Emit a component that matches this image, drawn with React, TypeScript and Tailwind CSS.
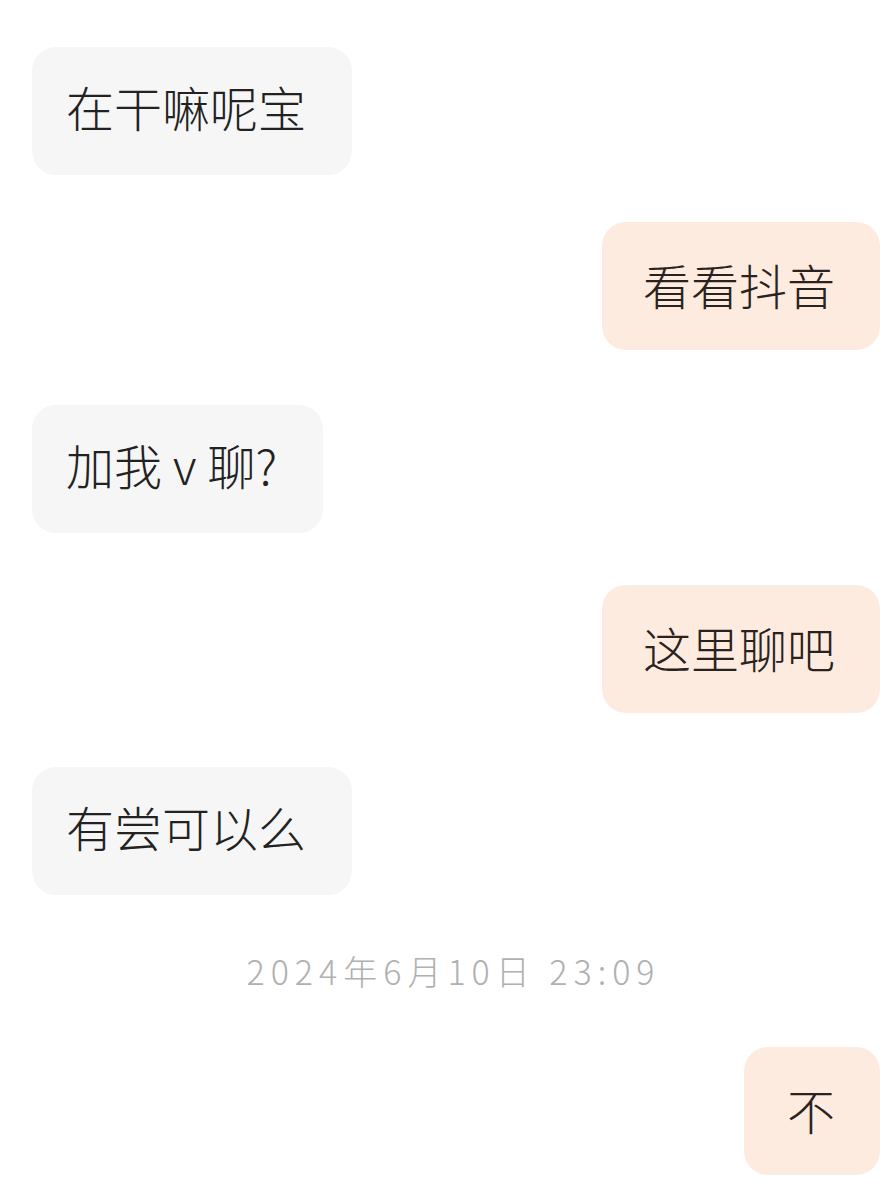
import React from "react";

const font = { fontFamily: '"Noto Sans CJK SC", "Noto Sans", sans-serif' };

function Left({ children, mt }: { children: React.ReactNode; mt: string }) {
  return (
    <div className={`flex justify-start pl-[32px] ${mt}`}>
      <div className="h-[128px] flex items-center rounded-[24px] bg-[#f6f6f6] pl-[34px] pr-[46px] pb-[10px] text-[48px] leading-none font-light text-[#222222]">
        {children}
      </div>
    </div>
  );
}

function Right({ children, mt, px }: { children: React.ReactNode; mt: string; px?: string }) {
  return (
    <div className={`flex justify-end pr-[9px] ${mt}`}>
      <div
        className={`h-[128px] flex items-center rounded-[24px] bg-[#fdebdf] ${px ?? "pl-[41px] pr-[45px]"} pb-[4px] text-[48px] leading-none font-light text-[#2a221e]`}
      >
        {children}
      </div>
    </div>
  );
}

export default function App() {
  return (
    <div className="w-[889px] h-[1185px] bg-white overflow-hidden" style={font}>
      <div className="flex flex-col pt-[47px]">
        <Left mt="mt-0">在干嘛呢宝</Left>
        <Right mt="mt-[47px]">看看抖音</Right>
        <Left mt="mt-[55px]">
          加我<span className="mx-[11px]">v</span>聊?
        </Left>
        <Right mt="mt-[52px]">这里聊吧</Right>
        <Left mt="mt-[54px]">有尝可以么</Left>
        <div className="h-[152px] flex items-center justify-center pl-[18px]">
          <span className="text-[34px] leading-none font-light text-[#b0b0b0] tracking-[6px]">
            2024年6月10日 23:09
          </span>
        </div>
        <Right mt="mt-0" px="pl-[43px] pr-[45px]">不</Right>
      </div>
    </div>
  );
}
